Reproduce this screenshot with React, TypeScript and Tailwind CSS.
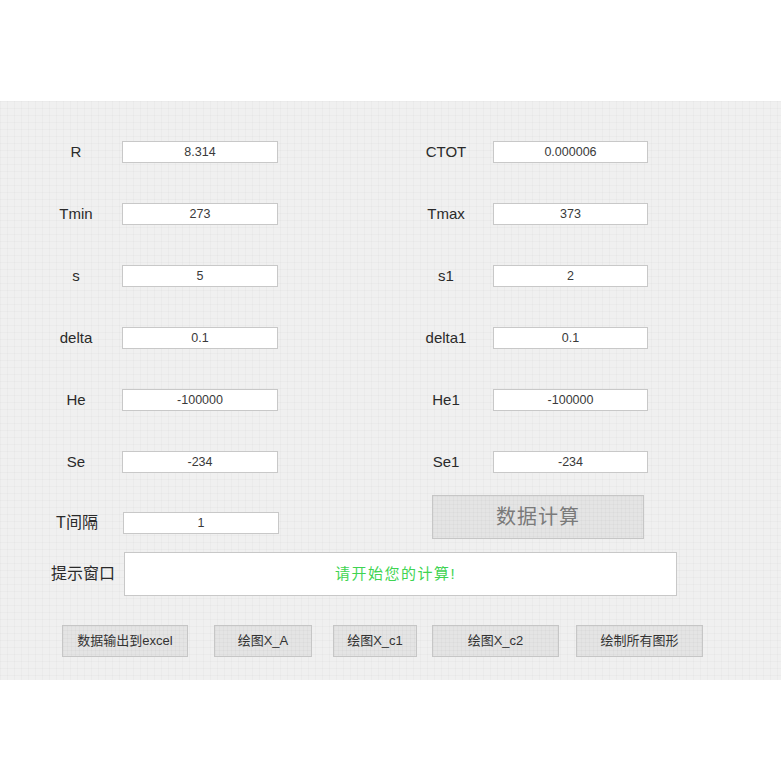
import React from 'react';

const gridBg =
  'bg-[#f0f0f0] bg-[image:linear-gradient(to_right,rgba(0,0,0,0.02)_1px,transparent_1px),linear-gradient(to_bottom,rgba(0,0,0,0.02)_1px,transparent_1px)] bg-[size:7px_7px]';

const btnBg =
  'bg-[#e4e4e4] bg-[image:linear-gradient(to_right,rgba(0,0,0,0.025)_1px,transparent_1px),linear-gradient(to_bottom,rgba(0,0,0,0.025)_1px,transparent_1px)] bg-[size:4px_4px] border border-[#c6c6c6]';

const font = "font-['Liberation_Sans','Noto_Sans_CJK_SC',sans-serif]";

const rows = [
  ['R', '8.314', 'CTOT', '0.000006'],
  ['Tmin', '273', 'Tmax', '373'],
  ['s', '5', 's1', '2'],
  ['delta', '0.1', 'delta1', '0.1'],
  ['He', '-100000', 'He1', '-100000'],
  ['Se', '-234', 'Se1', '-234'],
];

const Field: React.FC<{ value: string; w: string }> = ({ value, w }) => (
  <div
    className={`${w} h-[22px] bg-white border border-[#c8c8c8] flex items-center justify-center text-[12.5px] text-[#3a3a3a]`}
  >
    {value}
  </div>
);

const App: React.FC = () => {
  return (
    <div className={`w-[781px] h-[781px] bg-white ${font}`}>
      <div className="h-[101px]" />
      <div className={`h-[579px] ${gridBg} pt-[40px]`}>
        <div className="flex flex-col gap-[40px]">
          {rows.map(([l1, v1, l2, v2]) => (
            <div key={l1} className="flex items-center h-[22px]">
              <div className="ml-[40px] w-[72px] text-center text-[15px] text-[#2a2a2a]">{l1}</div>
              <div className="ml-[10px]">
                <Field value={v1} w="w-[156px]" />
              </div>
              <div className="ml-[138px] w-[60px] text-center text-[15px] text-[#2a2a2a]">{l2}</div>
              <div className="ml-[17px]">
                <Field value={v2} w="w-[155px]" />
              </div>
            </div>
          ))}
        </div>

        <div className="mt-[22px] flex items-start h-[44px]">
          <div className="mt-[17px] ml-[40px] w-[74px] h-[22px] flex items-center justify-center text-[16px] text-[#2a2a2a]">
            T间隔
          </div>
          <div className="mt-[17px] ml-[9px]">
            <Field value="1" w="w-[156px]" />
          </div>
          <button
            className={`ml-[153px] w-[212px] h-[44px] ${btnBg} text-[20px] text-[#7a7a7a] tracking-[1px]`}
          >
            数据计算
          </button>
        </div>

        <div className="mt-[13px] flex items-center h-[44px]">
          <div className="w-[115px] text-right text-[16px] text-[#2a2a2a]">提示窗口</div>
          <div className="ml-[9px] w-[553px] h-[44px] bg-white border border-[#c8c8c8] flex items-center justify-center">
            <span className="mr-[10px] text-[15px] text-[#3fd452] tracking-[1.5px]">请开始您的计算!</span>
          </div>
        </div>

        <div className="mt-[29px] flex items-center h-[32px] text-[13px] text-[#333]">
          <button className={`ml-[62px] w-[126px] h-[32px] ${btnBg}`}>数据输出到excel</button>
          <button className={`ml-[26px] w-[98px] h-[32px] ${btnBg}`}>绘图X_A</button>
          <button className={`ml-[21px] w-[84px] h-[32px] ${btnBg}`}>绘图X_c1</button>
          <button className={`ml-[15px] w-[127px] h-[32px] ${btnBg}`}>绘图X_c2</button>
          <button className={`ml-[17px] w-[127px] h-[32px] ${btnBg}`}>绘制所有图形</button>
        </div>
      </div>
    </div>
  );
};

export default App;
